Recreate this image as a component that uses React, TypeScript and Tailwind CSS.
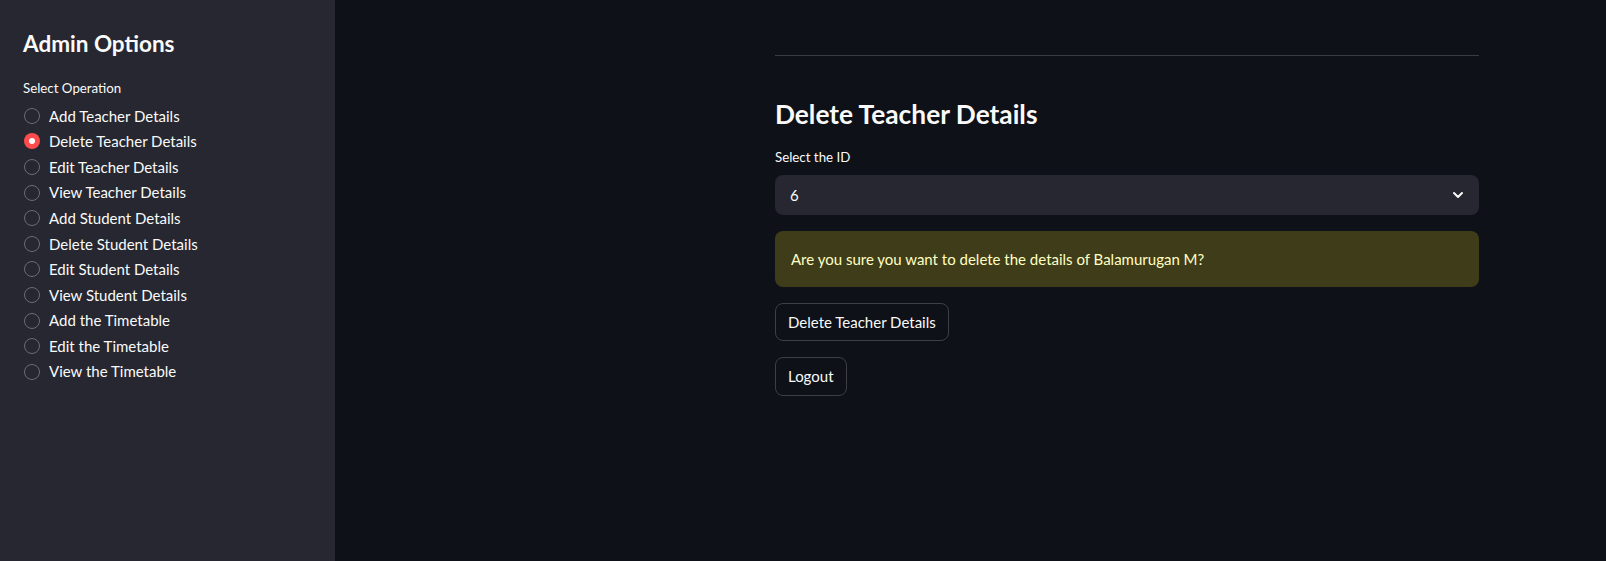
import { ChevronDown } from "lucide-react";

const options = [
  "Add Teacher Details",
  "Delete Teacher Details",
  "Edit Teacher Details",
  "View Teacher Details",
  "Add Student Details",
  "Delete Student Details",
  "Edit Student Details",
  "View Student Details",
  "Add the Timetable",
  "Edit the Timetable",
  "View the Timetable",
];

const selected = "Delete Teacher Details";

function Radio({ label, active }: { label: string; active: boolean }) {
  return (
    <label className="flex h-[25.6px] items-center gap-[9px]">
      {active ? (
        <span className="flex h-4 w-4 items-center justify-center rounded-full bg-[#ff4b4b]">
          <span className="h-[6px] w-[6px] rounded-full bg-white" />
        </span>
      ) : (
        <span className="h-4 w-4 rounded-full border border-[#6b6c73]" />
      )}
      <span className="text-[15px] text-[#fafafa]">{label}</span>
    </label>
  );
}

export default function App() {
  return (
    <div className="flex h-[561px] w-full bg-[#0e1117] font-['Lato',sans-serif] text-[#fafafa]">
      <aside className="w-[335px] shrink-0 bg-[#262730] px-[23px] pt-[29px]">
        <h2 className="text-[22.5px] font-bold leading-[30px]">Admin Options</h2>
        <p className="mt-[21px] text-[13.3px] leading-[16px]">Select Operation</p>
        <div className="mt-[7px] flex flex-col pl-[1px]">
          {options.map((o) => (
            <Radio key={o} label={o} active={o === selected} />
          ))}
        </div>
      </aside>

      <main className="flex-1 pl-[440px] pr-[127px] pt-[55px]">
        <hr className="border-0 border-t border-[#3a3c43]" />

        <h3 className="mt-[41px] text-[26.3px] font-bold leading-[34px]">Delete Teacher Details</h3>

        <p className="mt-[18px] text-[13.3px] leading-[16px]">Select the ID</p>
        <div className="mt-[10px] flex h-[40px] items-center justify-between rounded-lg bg-[#262730] pl-[15px] pr-[13px]">
          <span className="text-[15px]">6</span>
          <ChevronDown size={16} strokeWidth={3} className="text-[#fafafa]" />
        </div>

        <div className="mt-[16px] flex h-[56px] items-center rounded-lg bg-[#3f3c19] px-[16px]">
          <span className="text-[15px] text-[#ffffc2]">
            Are you sure you want to delete the details of Balamurugan M?
          </span>
        </div>

        <div className="mt-[16px] flex flex-col items-start gap-[16px]">
          <button className="h-[38px] rounded-lg border border-[#3d3f45] bg-[#0e1117] px-[12px] text-[15px]">
            Delete Teacher Details
          </button>
          <button className="h-[39px] rounded-lg border border-[#3d3f45] bg-[#0e1117] px-[12px] text-[15px]">
            Logout
          </button>
        </div>
      </main>
    </div>
  );
}
